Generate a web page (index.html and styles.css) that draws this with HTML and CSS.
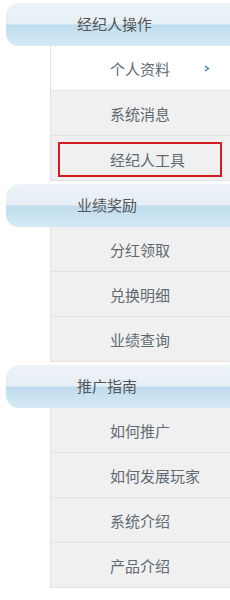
FILE: index.html
```html
<!DOCTYPE html>
<html lang="zh-CN">
<head>
    <meta charset="UTF-8">
    <meta name="viewport" content="width=device-width, initial-scale=1.0">
    <title>经纪人菜单</title>
    <link rel="stylesheet" href="styles.css">
</head>
<body>
    <div class="menu">
        <h3 class="group-title">经纪人操作</h3>
        <ul class="items">
            <li class="active">
                <span>个人资料</span>
                <svg class="arrow" width="6" height="7" viewBox="0 0 6 7"><path d="M1 1 L4.5 3.5 L1 6" fill="none" stroke="#2f86c4" stroke-width="1.4"/></svg>
            </li>
            <li><span>系统消息</span></li>
            <li class="boxed"><span class="tool">经纪人工具</span></li>
        </ul>

        <h3 class="group-title">业绩奖励</h3>
        <ul class="items">
            <li><span>分红领取</span></li>
            <li><span>兑换明细</span></li>
            <li><span>业绩查询</span></li>
        </ul>

        <h3 class="group-title">推广指南</h3>
        <ul class="items">
            <li><span>如何推广</span></li>
            <li><span>如何发展玩家</span></li>
            <li><span>系统介绍</span></li>
            <li><span>产品介绍</span></li>
        </ul>
    </div>
</body>
</html>
```

FILE: styles.css
```css
body {
    margin: 0;
    font-family: "Noto Sans CJK SC", "Microsoft YaHei", sans-serif;
    background: #fff;
}
.menu {
    width: 230px;
}
.group-title {
    margin: 3px 0 0 6px;
    height: 43px;
    line-height: 42px;
    padding-left: 71px;
    font-size: 15px;
    font-weight: normal;
    color: #555;
    border-radius: 13px 0 0 13px;
    background: linear-gradient(to bottom, #edf3f7 0%, #e6eff5 48%, #c0ddef 52%, #d4e9f5 100%);
}
.items {
    list-style: none;
    margin: 0 0 0 50px;
    padding: 0;
    border-left: 1px solid #e2e2e2;
}
.items li {
    display: flex;
    align-items: center;
    height: 44px;
    padding-left: 59px;
    padding-right: 20px;
    font-size: 15px;
    color: #5f6a73;
    background: #f0f0f0;
    border-bottom: 1px solid #e3e3e3;
}
.items li.active {
    background: #fff;
}
.arrow {
    margin-left: auto;
}
.items li.boxed {
    padding: 0;
    align-items: flex-start;
}
.tool {
    display: flex;
    align-items: center;
    box-sizing: border-box;
    margin: 6px 8px 0 7px;
    height: 35px;
    flex: 1;
    padding-left: 50px;
    border: 2px solid #d21b22;
}
```
